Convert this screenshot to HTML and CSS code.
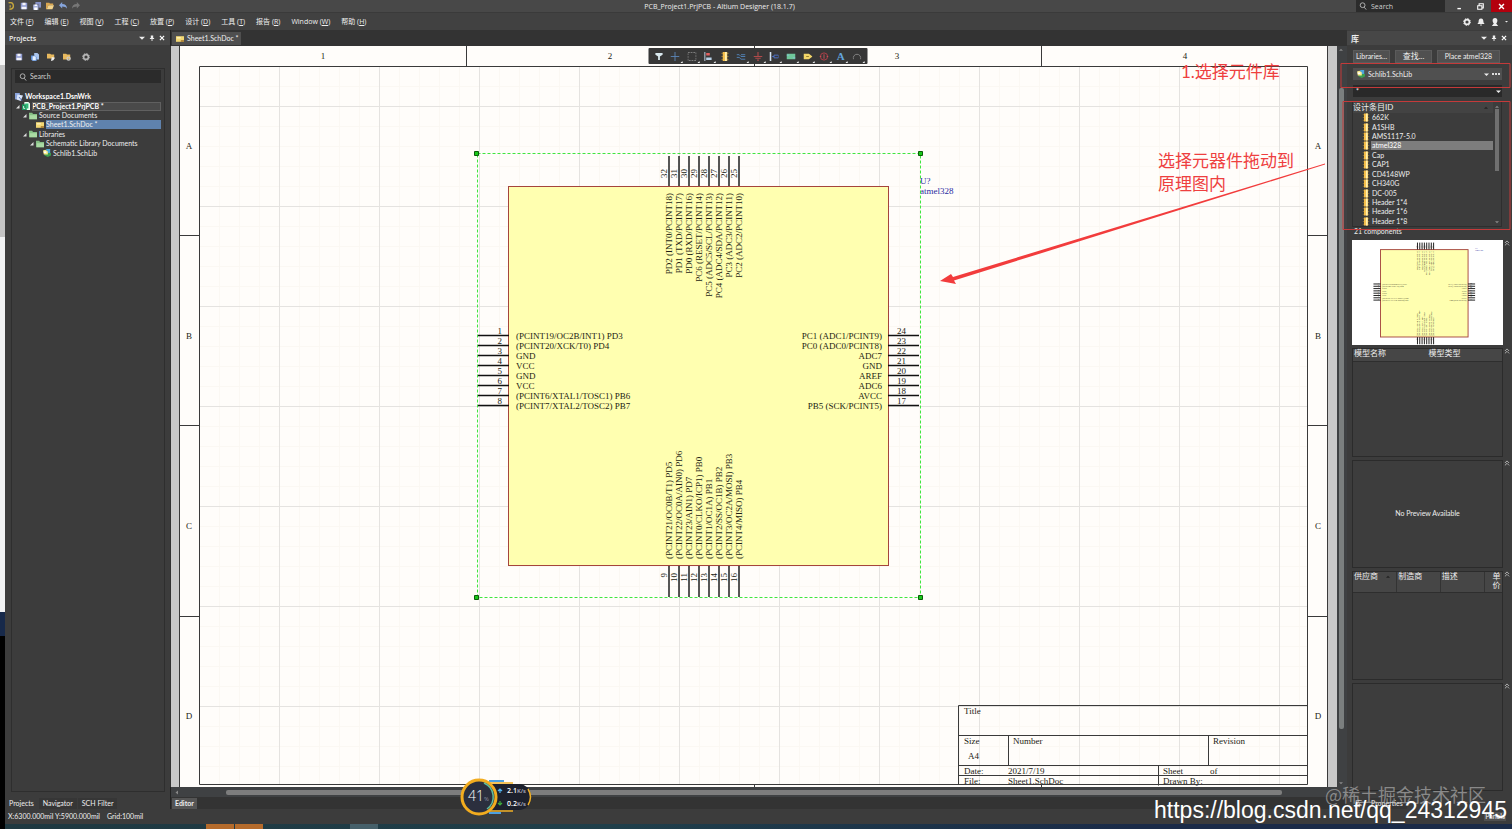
FILE: index.html
```html
<!DOCTYPE html>
<html lang="zh-CN">
<head>
    <meta charset="UTF-8">
    <meta name="viewport" content="width=device-width, initial-scale=1.0">
    <title>PCB_Project1.PrjPCB - Altium Designer (18.1.7)</title>
    <link rel="stylesheet" href="styles.css">
</head>
<body>
    <svg class="defs" aria-hidden="true">
        <symbol id="i-save" viewBox="0 0 10 10"><path d="M1 1h8v8H1z" fill="#8f9bd0"/><path d="M3 1h4v3H3zM2 6h6v3H2z" fill="#f4f4fa"/></symbol>
        <symbol id="i-saveall" viewBox="0 0 10 10"><path d="M3 0h7v7H3z" fill="#8792c8"/><path d="M0 3h7v7H0z" fill="#a9b3e0" stroke="#444" stroke-width=".5"/><path d="M2 3h3v2H2zM1.500 7h4v3h-4z" fill="#fff"/></symbol>
        <symbol id="i-docs" viewBox="0 0 10 10"><path d="M4 0h4l2 2v6H4z" fill="#a9c4ec"/><path d="M0 3h4l3 2v5H2L0 8z" fill="#5f8fd6"/><path d="M2 4h3l1 1v4H2z" fill="#e6effc"/></symbol>
        <symbol id="i-open" viewBox="0 0 10 10"><path d="M0 1h4l1 1h4v2H3L1 9H0z" fill="#d9a650"/><path d="M3 4h7L8 9H1z" fill="#f5d58c"/></symbol>
        <symbol id="i-undo" viewBox="0 0 10 10"><path d="M0 4l4-4v2.500c4 0 6 2 6 6-1-2-3-3-6-3V8z" fill="#86a5dc"/></symbol>
        <symbol id="i-redo" viewBox="0 0 10 10"><path d="M10 4L6 0v2.500c-4 0-6 2-6 6 1-2 3-3 6-3V8z" fill="#777"/></symbol>
        <symbol id="i-search" viewBox="0 0 10 10"><circle cx="4.500" cy="4" r="3" fill="none" stroke="#ccc"/><path d="M6.500 6.500L9 9.500" stroke="#ccc"/></symbol>
        <symbol id="i-gear" viewBox="0 0 10 10"><circle cx="5" cy="5" r="3" fill="none" stroke="currentColor" stroke-width="2"/><circle cx="5" cy="5" r="4.300" fill="none" stroke="currentColor" stroke-width="1.200" stroke-dasharray="1.700 1.677"/></symbol>
        <symbol id="i-bell" viewBox="0 0 10 10"><path d="M5 0.500c2.500 0 3 2 3 4 0 1.500.5 2 1.500 3H.5c1-1 1.500-1.500 1.500-3 0-2 .5-4 3-4zM4 8h2v1.500H4z" fill="#eee"/></symbol>
        <symbol id="i-user" viewBox="0 0 10 10"><path d="M5 0c2 0 3 1.500 3 3.200S7 6.500 6.500 7L9 10H1l2.500-3C3 6.500 2 5 2 3.200S3 0 5 0z" fill="#eee"/></symbol>
        <symbol id="i-down" viewBox="0 0 10 10"><path d="M0 3h10L5 8z" fill="currentColor"/></symbol>
        <symbol id="i-up" viewBox="0 0 10 10"><path d="M0 7h10L5 2z" fill="currentColor"/></symbol>
        <symbol id="i-pin" viewBox="0 0 10 10"><path d="M3 1h4v4h1.500v1.500H1.500V5H3z" fill="#eee"/><path d="M5 6v4" stroke="#eee" stroke-width="1.500"/></symbol>
        <symbol id="i-x" viewBox="0 0 10 10"><path d="M1.500 1.500l7 7m0-7l-7 7" stroke="#fff" stroke-width="2"/></symbol>
        <symbol id="i-tri" viewBox="0 0 10 10"><path d="M9 2v7H2z" fill="#ddd"/></symbol>
        <symbol id="i-folder" viewBox="0 0 10 10"><path d="M0 1h4l1 1.500h5V9H0z" fill="#86bf86"/><path d="M1 4h9v5H1z" fill="#a9d9a3"/></symbol>
        <symbol id="i-sheet" viewBox="0 0 10 10"><path d="M0 1.500h10v7H0z" fill="#f3d772"/><path d="M6 6.500h4v2H6z" fill="#a4782f"/><path d="M1 2.500h5v2H1z" fill="#fbeeb0"/></symbol>
        <symbol id="i-prj" viewBox="0 0 10 10"><path d="M3 0h5l2 2v8H3z" fill="#e9fff2"/><path d="M0 3h6v7H0z" fill="#1a9a60"/><path d="M4 2h4v6H6V4H4z" fill="#2cba78"/><path d="M2 5v3h2" fill="none" stroke="#fff"/></symbol>
        <symbol id="i-work" viewBox="0 0 10 10"><path d="M0 0h6v8H0z" fill="#8aa4dd"/><path d="M3 2l7 1-3 7-5-2z" fill="#d9e4fa"/><path d="M5 5l4 5" stroke="#4569b5"/></symbol>
        <symbol id="i-lib" viewBox="0 0 10 10"><path d="M4 0h5v5H4z" fill="#4ba5d8"/><path d="M2 5h8v3L6 10 2 8z" fill="#3c9e4f"/><path d="M0 2l3-1 3 2v4H1z" fill="#fbeb8c"/><path d="M1 3h3v2H1z" fill="#fff"/></symbol>
        <symbol id="i-part" viewBox="0 0 10 10"><path d="M1 1.500h8M1 5h8M1 8.500h8" stroke="#9a7a34"/><path d="M2.500 0h5v10h-5z" fill="#f5bf4c"/><path d="M5 0h2v10H5z" fill="#fff0b0"/></symbol>
        <symbol id="i-chev" viewBox="0 0 10 10"><path d="M1.500 5L5 1.500 8.500 5M1.500 9L5 5.500 8.500 9" fill="none" stroke="#bbb" stroke-width="1.500"/></symbol>
    </svg>

    <div class="backdrop"><i></i><b></b></div>

    <div class="app">
        <header class="titlebar">
            <div class="quick">
                <svg viewBox="0 0 10 10"><path d="M2 1c4-1 6 1 6 4S6 9 3 9" fill="none" stroke="#c5a63d" stroke-width="1.800"/><path d="M4 4v3" stroke="#c5a63d" stroke-width="1.500"/></svg>
                <svg><use href="#i-save"/></svg>
                <svg><use href="#i-saveall"/></svg>
                <svg><use href="#i-open"/></svg>
                <svg><use href="#i-undo"/></svg>
                <svg><use href="#i-redo"/></svg>
            </div>
            <h1>PCB_Project1.PrjPCB - Altium Designer (18.1.7)</h1>
            <div class="window-tools">
                <label class="top-search"><svg><use href="#i-search"/></svg><input type="text" placeholder="Search" aria-label="Search"></label>
                <button class="win" aria-label="Minimize"><svg viewBox="0 0 10 10"><path d="M2 8h5" stroke="#fff" stroke-width="2"/></svg></button>
                <button class="win" aria-label="Restore"><svg viewBox="0 0 10 10"><path d="M1 4h6v5H1zM3 4V1h6v6H7" fill="none" stroke="#fff" stroke-width="1.500"/></svg></button>
                <button class="win close" aria-label="Close"><svg><use href="#i-x"/></svg></button>
            </div>
        </header>

        <nav class="menubar">
            <button>文件 (<u>F</u>)</button>
            <button>编辑 (<u>E</u>)</button>
            <button>视图 (<u>V</u>)</button>
            <button>工程 (<u>C</u>)</button>
            <button>放置 (<u>P</u>)</button>
            <button>设计 (<u>D</u>)</button>
            <button>工具 (<u>T</u>)</button>
            <button>报告 (<u>R</u>)</button>
            <button>Window (<u>W</u>)</button>
            <button>帮助 (<u>H</u>)</button>
            <div class="account">
                <svg><use href="#i-gear"/></svg>
                <svg><use href="#i-bell"/></svg>
                <svg><use href="#i-user"/></svg>
                <svg class="tiny"><use href="#i-down"/></svg>
            </div>
        </nav>

        <main class="workspace">
            <aside class="projects">
                <div class="panel-head">
                    <h2>Projects</h2>
                    <svg><use href="#i-down"/></svg>
                    <svg><use href="#i-pin"/></svg>
                    <svg><use href="#i-x"/></svg>
                </div>
                <div class="project-tools">
                    <svg><use href="#i-save"/></svg>
                    <svg><use href="#i-docs"/></svg>
                    <svg viewBox="0 0 10 10"><path d="M0 1h4l1 1h4v5H0z" fill="#e8b95e"/><path d="M6 5l4 1-2 3-3 1z" fill="#eee"/></svg>
                    <svg viewBox="0 0 10 10"><path d="M0 1h4l1 1h4v6H0z" fill="#e8b95e"/><circle cx="7" cy="7" r="2" fill="none" stroke="#ccc" stroke-width="1.500"/></svg>
                    <svg><use href="#i-gear"/></svg>
                </div>
                <div class="project-body">
                    <label class="project-search"><svg><use href="#i-search"/></svg><input type="text" placeholder="Search" aria-label="Search projects"></label>
                    <ul class="tree">
                        <li class="bold"><svg><use href="#i-work"/></svg><span>Workspace1.DsnWrk</span></li>
                        <li class="bold lv1 project"><svg class="tri"><use href="#i-tri"/></svg><svg><use href="#i-prj"/></svg><span>PCB_Project1.PrjPCB *</span></li>
                        <li class="lv2"><svg class="tri"><use href="#i-tri"/></svg><svg><use href="#i-folder"/></svg><span>Source Documents</span></li>
                        <li class="lv3 current"><svg><use href="#i-sheet"/></svg><span>Sheet1.SchDoc *</span></li>
                        <li class="lv2"><svg class="tri"><use href="#i-tri"/></svg><svg><use href="#i-folder"/></svg><span>Libraries</span></li>
                        <li class="lv4"><svg class="tri"><use href="#i-tri"/></svg><svg><use href="#i-folder"/></svg><span>Schematic Library Documents</span></li>
                        <li class="lv5"><svg><use href="#i-lib"/></svg><span>Schlib1.SchLib</span></li>
                    </ul>
                </div>
                <div class="bottom-tabs">
                    <button class="active">Projects</button>
                    <button>Navigator</button>
                    <button>SCH Filter</button>
                </div>
            </aside>

            <section class="editor">
                <div class="doc-tabs">
                    <button><svg><use href="#i-sheet"/></svg>Sheet1.SchDoc *</button>
                </div>
                <div class="canvas-row">
                    <div class="canvas">
                        <svg class="sheet" viewBox="171 46 1166 741" preserveAspectRatio="xMinYMin meet">
                            <defs>
                                <pattern id="fine" x="199" y="6" width="20" height="20" patternUnits="userSpaceOnUse"><path d="M.5 0v20M0 .5h20" stroke="#fbf8f3" fill="none"/></pattern>
                                <pattern id="grid" x="179" y="106" width="100" height="100" patternUnits="userSpaceOnUse"><path d="M.5 0v100M0 .5h100" stroke="#e5e3e0" fill="none"/></pattern>
                            </defs>
                            <rect x="179" y="46" width="1149" height="741" fill="#fffdfa"/>
                            <rect x="199" y="66" width="1109" height="719" fill="url(#fine)"/>
                            <rect x="199" y="66" width="1109" height="719" fill="url(#grid)"/>
                            <path class="frame" d="M199.500 66.500h1108v718h-1108zM179.500 46v741M1327.500 46v741M466.500 46v20M754.500 46v20M1041.500 46v20M466.500 785v2M754.500 785v2M1041.500 785v2M179 235.500h20M179 425.500h20M179 616.500h20M1308 235.500h20M1308 425.500h20M1308 616.500h20"/>
                            <g class="zones">
                                <text x="323" y="59">1</text><text x="610" y="59">2</text><text x="897" y="59">3</text><text x="1185" y="59">4</text>
                                <text x="189" y="149">A</text><text x="189" y="339">B</text><text x="189" y="529">C</text><text x="189" y="719">D</text>
                                <text x="1318" y="149">A</text><text x="1318" y="339">B</text><text x="1318" y="529">C</text><text x="1318" y="719">D</text>
                            </g>

                            <!-- title block -->
                            <path class="frame" d="M958.500 785v-79.500h349M958.500 735.500h349M958.500 765.500h349M958.500 775.500h349M1008.500 735.500v30M1208.500 735.500v30M1158.500 765.500v20"/>
                            <g class="block">
                                <text x="964" y="714">Title</text>
                                <text x="964" y="744">Size</text><text x="968" y="759">A4</text>
                                <text x="1013" y="744">Number</text><text x="1213" y="744">Revision</text>
                                <text x="964" y="774">Date:</text><text x="1008" y="774">2021/7/19</text>
                                <text x="1163" y="774">Sheet</text><text x="1210" y="774">of</text>
                                <text x="964" y="784">File:</text><text x="1008" y="784">Sheet1.SchDoc</text>
                                <text x="1163" y="784">Drawn By:</text>
                            </g>

                            <g id="chip">
                                <rect class="body" x="508.500" y="186.500" width="380" height="379"/>
                                <path class="pins" d="M478 335.500h31M478 345.500h31M478 355.500h31M478 365.500h31M478 375.500h31M478 385.500h31M478 395.500h31M478 405.500h31M888 335.500h31M888 345.500h31M888 355.500h31M888 365.500h31M888 375.500h31M888 385.500h31M888 395.500h31M888 405.500h31M669 156v30M679 156v30M689 156v30M699 156v30M709 156v30M719 156v30M729 156v30M739 156v30M669 566v31M679 566v31M689 566v31M699 566v31M709 566v31M719 566v31M729 566v31M739 566v31"/>
                                <g class="names">
                                    <text x="516" y="339">(PCINT19/OC2B/INT1) PD3</text>
                                    <text x="516" y="349">(PCINT20/XCK/T0) PD4</text>
                                    <text x="516" y="359">GND</text>
                                    <text x="516" y="369">VCC</text>
                                    <text x="516" y="379">GND</text>
                                    <text x="516" y="389">VCC</text>
                                    <text x="516" y="399">(PCINT6/XTAL1/TOSC1) PB6</text>
                                    <text x="516" y="409">(PCINT7/XTAL2/TOSC2) PB7</text>
                                </g>
                                <g class="names end">
                                    <text x="882" y="339">PC1 (ADC1/PCINT9)</text>
                                    <text x="882" y="349">PC0 (ADC0/PCINT8)</text>
                                    <text x="882" y="359">ADC7</text>
                                    <text x="882" y="369">GND</text>
                                    <text x="882" y="379">AREF</text>
                                    <text x="882" y="389">ADC6</text>
                                    <text x="882" y="399">AVCC</text>
                                    <text x="882" y="409">PB5 (SCK/PCINT5)</text>
                                </g>
                                <g class="numbers end">
                                    <text x="502" y="334">1</text><text x="502" y="344">2</text><text x="502" y="354">3</text><text x="502" y="364">4</text>
                                    <text x="502" y="374">5</text><text x="502" y="384">6</text><text x="502" y="394">7</text><text x="502" y="404">8</text>
                                </g>
                                <g class="numbers">
                                    <text x="897" y="334">24</text><text x="897" y="344">23</text><text x="897" y="354">22</text><text x="897" y="364">21</text>
                                    <text x="897" y="374">20</text><text x="897" y="384">19</text><text x="897" y="394">18</text><text x="897" y="404">17</text>
                                </g>
                                <!-- vertical pins, drawn along x then turned upwards -->
                                <g class="names end" transform="translate(0 193) rotate(-90)">
                                    <text y="672">PD2 (INT0/PCINT18)</text>
                                    <text y="682">PD1 (TXD/PCINT17)</text>
                                    <text y="692">PD0 (RXD/PCINT16)</text>
                                    <text y="702">PC6 (RESET/PCINT14)</text>
                                    <text y="712">PC5 (ADC5/SCL/PCINT13)</text>
                                    <text y="722">PC4 (ADC4/SDA/PCINT12)</text>
                                    <text y="732">PC3 (ADC3/PCINT11)</text>
                                    <text y="742">PC2 (ADC2/PCINT10)</text>
                                </g>
                                <g class="numbers" transform="translate(0 178) rotate(-90)">
                                    <text y="667">32</text><text y="677">31</text><text y="687">30</text><text y="697">29</text>
                                    <text y="707">28</text><text y="717">27</text><text y="727">26</text><text y="737">25</text>
                                </g>
                                <g class="names" transform="translate(0 559) rotate(-90)">
                                    <text y="672">(PCINT21/OC0B/T1) PD5</text>
                                    <text y="682">(PCINT22/OC0A/AIN0) PD6</text>
                                    <text y="692">(PCINT23/AIN1) PD7</text>
                                    <text y="702">(PCINT0/CLKO/ICP1) PB0</text>
                                    <text y="712">(PCINT1/OC1A) PB1</text>
                                    <text y="722">(PCINT2/SS/OC1B) PB2</text>
                                    <text y="732">(PCINT3/OC2A/MOSI) PB3</text>
                                    <text y="742">(PCINT4/MISO) PB4</text>
                                </g>
                                <g class="numbers end" transform="translate(0 573) rotate(-90)">
                                    <text y="667">9</text><text y="677">10</text><text y="687">11</text><text y="697">12</text>
                                    <text y="707">13</text><text y="717">14</text><text y="727">15</text><text y="737">16</text>
                                </g>
                                <g class="labels"><text x="920" y="184">U?</text><text x="920" y="194">atmel328</text></g>
                            </g>
                            <rect class="selection" x="477.500" y="153.500" width="443" height="444"/>
                            <path class="handles" d="M474.500 151.500h4v4h-4zM918.500 151.500h4v4h-4zM474.500 595.500h4v4h-4zM918.500 595.500h4v4h-4z"/>
                        </svg>

                        <div class="float-bar">
                            <button aria-label="Filter"><svg viewBox="0 0 10 10"><path d="M1 1h8v2L6 5v4H4V5L1 3z" fill="#d9e8ee"/></svg></button>
                            <button class="more" aria-label="Move"><svg viewBox="0 0 10 10"><path d="M5 0v10M0 5h10" stroke="#5b86b8"/></svg></button>
                            <button class="more" aria-label="Select"><svg viewBox="0 0 10 10"><path d="M.5.5h9v9h-9z" fill="none" stroke="#8a8a8a" stroke-dasharray="2 1"/></svg></button>
                            <button class="more" aria-label="Align"><svg viewBox="0 0 10 10"><path d="M1.500 0v10" stroke="#cde"/><path d="M3 1h4v3H3z" fill="#e06060"/><path d="M3 6h6v3H3z" fill="#b8d0e6"/></svg></button>
                            <button aria-label="Part"><svg><use href="#i-part"/></svg></button>
                            <button class="more" aria-label="Wire"><svg viewBox="0 0 10 10"><path d="M0 3h3l2 2h5M0 6h3l2 2h5M5 3h5" fill="none" stroke="#5587bc"/></svg></button>
                            <button class="more" aria-label="Power port"><svg viewBox="0 0 10 10"><path d="M5 0v5M0 5h10M2 7h6M4 9h2" stroke="#b04a4a" stroke-width="1.200"/></svg></button>
                            <button class="more" aria-label="Harness"><svg viewBox="0 0 10 10"><path d="M0 0h2v10H0z" fill="#d6e4f2"/><path d="M3 5h2m0-1.500h5v3H5z" stroke="#4e74d0" fill="none"/></svg></button>
                            <button class="more" aria-label="Sheet symbol"><svg viewBox="0 0 10 10"><path d="M0 2h10v6H0z" fill="#6fc79a"/><path d="M0 3h3v1H0zM7 6h3v1H7z" fill="#8ec0e6"/></svg></button>
                            <button class="more" aria-label="Port"><svg viewBox="0 0 10 10"><path d="M0 2h6l4 3-4 3H0z" fill="#f2d568"/><path d="M3 5h3" stroke="#8c7426"/></svg></button>
                            <button class="more" aria-label="Directive"><svg viewBox="0 0 10 10"><circle cx="5" cy="5" r="4" fill="none" stroke="#b8404a"/><path d="M5 2.500v5M0 5h2M8 5h2" stroke="#d05058"/></svg></button>
                            <button class="more letter" aria-label="Text">A</button>
                            <button class="more" aria-label="Arc"><svg viewBox="0 0 10 10"><path d="M1 8a4.200 4.200 0 1 1 8 0" fill="none" stroke="#888"/></svg></button>
                        </div>
                    </div>
                    <div class="vscroll"><svg><use href="#i-up"/></svg><i></i><svg><use href="#i-down"/></svg></div>
                </div>
                <div class="hscroll"><svg viewBox="0 0 10 10"><path d="M8 1v8L3 5z" fill="#888"/></svg><i></i></div>
                <div class="bottom-tabs"><button class="lit">Editor</button></div>
            </section>

            <aside class="library">
                <div class="panel-head">
                    <h2>库</h2>
                    <svg><use href="#i-down"/></svg>
                    <svg><use href="#i-pin"/></svg>
                    <svg><use href="#i-x"/></svg>
                </div>
                <div class="lib-buttons">
                    <button>Libraries...</button>
                    <button class="cjk">查找...</button>
                    <button class="wide">Place atmel328</button>
                </div>
                <div class="lib-select">
                    <svg><use href="#i-lib"/></svg>
                    <select aria-label="Library"><option>Schlib1.SchLib</option></select>
                    <svg class="arrow"><use href="#i-down"/></svg>
                    <span class="dots"></span>
                </div>
                <div class="lib-filter">
                    <input type="text" value="*" aria-label="Filter">
                    <svg class="arrow"><use href="#i-down"/></svg>
                </div>
                <div class="parts">
                    <h3>设计条目ID <svg><use href="#i-up"/></svg></h3>
                    <ul>
                        <li><svg><use href="#i-part"/></svg><span>662K</span></li>
                        <li><svg><use href="#i-part"/></svg><span>A1SHB</span></li>
                        <li><svg><use href="#i-part"/></svg><span>AMS1117-5.0</span></li>
                        <li class="current"><svg><use href="#i-part"/></svg><span>atmel328</span></li>
                        <li><svg><use href="#i-part"/></svg><span>Cap</span></li>
                        <li><svg><use href="#i-part"/></svg><span>CAP1</span></li>
                        <li><svg><use href="#i-part"/></svg><span>CD4148WP</span></li>
                        <li><svg><use href="#i-part"/></svg><span>CH340G</span></li>
                        <li><svg><use href="#i-part"/></svg><span>DC-005</span></li>
                        <li><svg><use href="#i-part"/></svg><span>Header 1*4</span></li>
                        <li><svg><use href="#i-part"/></svg><span>Header 1*6</span></li>
                        <li><svg><use href="#i-part"/></svg><span>Header 1*8</span></li>
                    </ul>
                    <div class="parts-scroll"><svg><use href="#i-up"/></svg><i></i><svg><use href="#i-down"/></svg></div>
                </div>
                <p class="count">21 components</p>
                <div class="block-row fixed">
                    <svg class="preview" viewBox="385 145 655 455"><use href="#chip"/></svg>
                    <svg class="chev"><use href="#i-chev"/></svg>
                </div>
                <div class="block-row">
                    <div class="box models">
                        <table><thead><tr><th>模型名称</th><th>模型类型</th></tr></thead></table>
                    </div>
                    <svg class="chev"><use href="#i-chev"/></svg>
                </div>
                <div class="block-row">
                    <div class="box empty">No Preview Available</div>
                    <svg class="chev"><use href="#i-chev"/></svg>
                </div>
                <div class="block-row">
                    <div class="box suppliers">
                        <table><thead><tr><th>供应商 <svg><use href="#i-up"/></svg></th><th>制造商</th><th>描述</th><th class="price">单价</th></tr></thead></table>
                    </div>
                    <svg class="chev"><use href="#i-chev"/></svg>
                </div>
                <div class="block-row">
                    <div class="box"></div>
                    <svg class="chev"><use href="#i-chev"/></svg>
                </div>
                <div class="bottom-tabs"><button class="active">库</button><button>Properties</button></div>
            </aside>
        </main>

        <footer class="status">
            <span>X:6300.000mil Y:5900.000mil</span>
            <span>Grid:100mil</span>
            <button>Panels</button>
        </footer>
        <div class="taskbar"><i></i><i></i><b></b></div>
    </div>

    <!-- notes drawn over the window -->
    <svg class="notes" viewBox="0 0 372 300">
        <path class="note-boxes" d="M201 63.500h169v24H201zM203 101.500h167v128H203z"/>
        <text x="41" y="78">1.选择元件库</text>
        <text x="18" y="167">选择元器件拖动到</text>
        <text x="18" y="190">原理图内</text>
        <path d="M185 163.500L-187 277-189 274-200 281-184 284-186 280.500 185 164.500z" fill="#f23c3c"/>
    </svg>

    <div class="net-widget">
        <svg viewBox="0 0 74 40">
            <path d="M30 4h15M30 36h12" stroke="#4c9fe0" stroke-width="2"/>
            <path d="M30 7h30a12 13 0 0 1 0 26H30z" fill="#1d212d"/>
            <path d="M22 6h32M22 34h32M69 12q5 8 0 16" fill="none" stroke="#efaf25" stroke-width="1.500"/>
            <circle cx="20" cy="20" r="17" fill="#2b2f3e" stroke="#f2ac1f" stroke-width="3"/>
            <path d="M25 6a15 15 0 0 1 3 26" fill="none" stroke="#60bd9d" stroke-width="1.500"/>
            <path d="M41 16v-4M39 14l2-2 2 2" fill="none" stroke="#4fb2ef" stroke-width="1.200"/>
            <path d="M41 24v4M39 26l2 2 2-2" fill="none" stroke="#3faf3d" stroke-width="1.200"/>
        </svg>
        <strong>41<small>%</small></strong>
        <span class="rate up">2.1<small>K/s</small></span>
        <span class="rate down">0.2<small>K/s</small></span>
    </div>

    <div class="mark community">@稀土掘金技术社区</div>
    <div class="mark source">https://blog.csdn.net/qq_24312945</div>
</body>
</html>
```
FILE: styles.css
```css
* {
    box-sizing: border-box;
}
body {
    margin: 0;
    height: 100vh;
    display: flex;
    position: relative;
    overflow: hidden;
    background: #000;
    color: #eee;
    font-family: Lato, "Noto Sans CJK SC", sans-serif;
    font-size: 7px;
    line-height: 9px;
}
svg {
    display: block;
    width: 8px;
    height: 8px;
    flex: none;
}
.defs {
    position: absolute;
    width: 0;
    height: 0;
}
button, input, select {
    font: inherit;
    color: inherit;
    background: none;
    border: 0;
    padding: 0;
    margin: 0;
    min-width: 0;
    outline: none;
    appearance: none;
}
input::placeholder {
    color: #d0d0d0;
    opacity: 1;
}
ul {
    list-style: none;
    margin: 0;
    padding: 0;
}
h1, h2, h3, p {
    margin: 0;
    font-size: inherit;
    font-weight: normal;
}

/* window behind the app */
.backdrop {
    width: 5px;
    flex: none;
    display: flex;
    flex-direction: column;
    background: #000;
}
.backdrop i {
    height: 612px;
    background: linear-gradient(#f5f5f5 65px, #c4c4c4 65px, #c4c4c4 237px, #f1f2f3 237px);
}
.backdrop b {
    height: 24px;
    background: #17294a;
}
.app {
    flex: 1;
    min-width: 0;
    display: flex;
    flex-direction: column;
    background: #3c3c3c;
}

/* title bar and menu */
.titlebar {
    height: 13px;
    display: grid;
    grid-template-columns: 1fr auto 1fr;
    align-items: center;
    background: #484848;
    border-bottom: 1px solid #3a3a3a;
    font-family: "Open Sans", "Noto Sans CJK SC", sans-serif;
}
.quick {
    display: flex;
    gap: 5px;
    padding-left: 2px;
}
.titlebar h1 {
    padding-right: 78px;
}
.window-tools {
    display: flex;
    justify-content: flex-end;
}
.top-search {
    display: flex;
    align-items: center;
    width: 89px;
    height: 12px;
    padding-left: 3px;
    gap: 4px;
    margin-right: 4px;
    background: #2b2b2b;
}
.top-search input {
    width: 60px;
}
.win {
    width: 21px;
    height: 12px;
    display: flex;
    align-items: center;
    justify-content: center;
}
.win svg {
    width: 7px;
    height: 7px;
}
.win.close {
    background: #b3000d;
}
.menubar {
    height: 17px;
    display: flex;
    align-items: center;
    gap: 11px;
    padding-left: 5px;
    background: #414141;
    font-family: "Open Sans", "Noto Sans CJK SC", sans-serif;
}
.account {
    margin-left: auto;
    display: flex;
    align-items: center;
    gap: 6px;
    padding-right: 4px;
}
.account .tiny {
    width: 3px;
    height: 3px;
}

.workspace {
    flex: 1;
    min-height: 0;
    display: flex;
    background: #333;
}

/* shared panel parts */
.panel-head {
    height: 14px;
    margin-top: 1px;
    display: flex;
    align-items: center;
    gap: 4px;
    padding: 0 5px 0 4px;
    background: #474747;
}
.panel-head h2 {
    flex: 1;
    font-family: "Open Sans", "Noto Sans CJK SC", sans-serif;
    font-weight: 600;
}
.panel-head svg {
    width: 6px;
    height: 6px;
}
.bottom-tabs {
    height: 12px;
    display: flex;
    align-items: center;
    gap: 1px;
}
.bottom-tabs button {
    height: 11px;
    padding: 0 4px;
    background: #363636;
}
.bottom-tabs .active {
    background: #3c3c3c;
}
.bottom-tabs .lit {
    margin-left: 1px;
    padding: 0 3px;
    background: #555;
    font-weight: 700;
}

/* projects panel */
.projects {
    width: 166px;
    flex: none;
    display: flex;
    flex-direction: column;
    background: #3c3c3c;
    border-right: 1px solid #222;
}
.project-tools {
    display: flex;
    align-items: center;
    height: 22px;
    margin-top: 1px;
    padding-left: 10px;
    gap: 8px;
    color: #b5b5b5;
}
.project-tools svg:last-child {
    margin-left: 3px;
}
.project-body {
    flex: 1;
    margin: 0 5px 5px 6px;
    border: 1px solid #2e2e2e;
    padding: 1px 3px 0 3px;
}
.project-search {
    display: flex;
    align-items: center;
    gap: 3px;
    height: 13px;
    padding-left: 4px;
    background: #2b2b2b;
}
.tree {
    height: 66px;
    margin-top: 9px;
    display: grid;
    grid-template-rows: repeat(7, 1fr);
}
.tree li {
    display: flex;
    align-items: center;
    gap: 2px;
    min-height: 0;
    white-space: nowrap;
}
.tree .tri {
    width: 5px;
    height: 5px;
}
.bold {
    font-weight: 700;
    color: #fff;
}
.lv1 span, .lv3 span {
    flex: 1;
}
.project span {
    background: #4a4a4a;
    outline: 1px solid #606060;
    outline-offset: -1px;
}
.lv2 {
    padding-left: 7px;
}
.lv3 {
    padding-left: 21px;
}
.lv4 {
    padding-left: 14px;
}
.lv5 {
    padding-left: 28px;
}
.tree .current span {
    background: #5f82ad;
}

/* editor */
.editor {
    flex: 1;
    min-width: 0;
    display: flex;
    flex-direction: column;
}
.doc-tabs {
    height: 16px;
    padding-top: 2px;
    background: #333;
}
.doc-tabs button {
    height: 13px;
    display: flex;
    align-items: center;
    gap: 3px;
    padding: 0 2px 0 4px;
    margin-left: 1px;
    background: #4f4f4f;
}
.canvas-row {
    flex: 1;
    min-height: 0;
    display: flex;
}
.canvas {
    flex: 1;
    position: relative;
    background: #c9c9c9;
    border-left: 1px solid #333;
    margin-left: -1px;
}
.sheet {
    width: 100%;
    height: 100%;
}
.sheet text, .preview text {
    font-family: "Liberation Serif", serif;
    font-size: 9px;
    fill: #1c1c12;
}
.frame {
    fill: none;
    stroke: #3a3a3a;
}
.zones {
    text-anchor: middle;
}
.body {
    fill: #ffffb0;
    stroke: #a5453c;
    stroke-width: var(--edge, 1);
}
.pins {
    stroke: #111;
    stroke-width: var(--pin, 1.4);
}
.end {
    text-anchor: end;
}
.sheet .labels text {
    fill: #2a2aa0;
}
.selection {
    fill: none;
    stroke: #3fe63f;
    stroke-dasharray: 3 2;
}
.handles {
    fill: #18c818;
    stroke: #0a5c0a;
}
.float-bar {
    position: absolute;
    top: 2px;
    left: 50%;
    transform: translateX(-50%);
    margin-left: 4px;
    width: 219px;
    height: 16px;
    padding: 0 2px;
    display: flex;
    background: #373737;
    border-radius: 1px;
}
.float-bar button {
    flex: 1;
    display: flex;
    align-items: center;
    justify-content: center;
    position: relative;
}
.float-bar svg {
    width: 9px;
    height: 9px;
}
.float-bar .more::after {
    content: "";
    position: absolute;
    right: 1px;
    bottom: 1px;
    border: 1px solid #eee;
    border-left-color: transparent;
    border-top-color: transparent;
}
.float-bar .letter {
    font: bold 11px "Liberation Serif", serif;
    color: #62a4de;
}
.vscroll {
    width: 10px;
    padding: 2px 3px 2px 1px;
    display: flex;
    flex-direction: column;
    align-items: center;
    background: #3f4143;
    color: #888;
}
.vscroll svg {
    width: 4px;
    height: 4px;
}
.vscroll i {
    width: 5px;
    flex: 1;
    margin: 36px 0 52px;
    background: #7b7f7f;
    border-radius: 2px;
}
.hscroll {
    height: 10px;
    display: flex;
    align-items: center;
    background: #3f4143;
    padding: 0 65px 0 3px;
}
.hscroll svg {
    width: 5px;
    height: 5px;
}
.hscroll i {
    flex: 1;
    height: 5px;
    margin-left: 47px;
    background: #7d7d7d;
    border-radius: 2px;
}

/* library panel */
.library {
    width: 165px;
    flex: none;
    display: flex;
    flex-direction: column;
    background: #3c3c3c;
}
.library .panel-head h2 {
    font-size: 8px;
}
.lib-buttons {
    display: flex;
    gap: 5px;
    padding: 5px 12px 0 6px;
}
.lib-buttons button {
    width: 37px;
    height: 13px;
    background: #505050;
    border: 1px solid #5b5b5b;
}
.lib-buttons .cjk {
    font-size: 8px;
}
.lib-buttons .wide {
    flex: 1;
}
.lib-select, .lib-filter {
    height: 12px;
    margin: 5px 10px 0 6px;
    display: flex;
    align-items: center;
    gap: 3px;
    padding: 0 2px 0 4px;
    background: #505050;
}
.lib-select select, .lib-filter input {
    flex: 1;
}
.arrow {
    width: 5px;
    height: 5px;
}
.dots {
    width: 8px;
    border-top: 2px dotted #ddd;
}
.lib-filter {
    background: #292929;
    padding: 0 1px 0 3px;
}
.parts {
    display: grid;
    grid-template: 11px 113px / 1fr 8px;
    margin: 4px 10px 0 5px;
    border: 1px solid #2e2e2e;
}
.parts h3 {
    display: flex;
    align-items: center;
    justify-content: space-between;
    padding-right: 5px;
    background: #434343;
    font-size: 8px;
}
.parts h3 svg {
    width: 4px;
    height: 4px;
    color: #222;
}
.parts ul {
    grid-row: 2;
    display: grid;
    grid-template-rows: repeat(12, 1fr);
}
.parts li {
    display: flex;
    align-items: center;
    min-height: 0;
    gap: 1px;
    padding-left: 9px;
}
.parts li svg {
    height: 9px;
}
.parts li span {
    flex: 1;
    padding-left: 1px;
}
.parts .current span {
    background: #7d7d7d;
    color: #fff;
}
.parts-scroll {
    grid-column: 2;
    grid-row: 1 / 3;
    display: flex;
    flex-direction: column;
    align-items: center;
    padding: 3px 0 2px;
    color: #888;
}
.parts-scroll svg {
    width: 4px;
    height: 4px;
}
.parts-scroll i {
    width: 4px;
    height: 62px;
    margin-bottom: auto;
    background: #707070;
}
.count {
    padding-left: 7px;
    height: 13px;
}
.block-row {
    flex: 1;
    min-height: 0;
    display: flex;
    gap: 1px;
    padding-left: 5px;
    margin-bottom: 3px;
}
.block-row.fixed {
    flex: none;
}
.library .bottom-tabs {
    margin-top: 3px;
    padding-left: 4px;
}
.preview {
    --pin: 4;
    --edge: 4;
    width: 151px;
    height: 105px;
    background: #fff;
}
.chev {
    width: 6px;
    height: 6px;
}
.box {
    width: 151px;
    border: 1px solid #2b2b2b;
    background: #3d3d3d;
}
.box table {
    width: 100%;
    border-collapse: collapse;
    table-layout: fixed;
    font-size: 8px;
    background: #464646;
}
.box th {
    padding: 0 1px;
    font-weight: normal;
    text-align: left;
    vertical-align: top;
    border-bottom: 1px solid #2e2e2e;
}
.models th {
    height: 12px;
}
.suppliers th {
    height: 20px;
    border-right: 1px solid #333;
}
.suppliers th svg {
    display: inline-block;
    width: 4px;
    height: 4px;
    margin-left: 6px;
    color: #222;
}
.suppliers .price {
    width: 18px;
    padding-left: 8px;
    border-right: 0;
}
.empty {
    display: flex;
    align-items: center;
    justify-content: center;
}

/* status line and taskbar */
.status {
    height: 15px;
    display: flex;
    align-items: center;
    gap: 7px;
    padding: 0 6px 0 3px;
}
.status button {
    margin-left: auto;
    padding: 0 1px;
    background: #505050;
}
.taskbar {
    height: 5px;
    display: flex;
    gap: 1px;
    padding-left: 201px;
    background: linear-gradient(90deg, #1f3840, #203f4a 40%, #1b2b48 75%);
}
.taskbar i {
    width: 28px;
    background: #b56b2c;
}
.taskbar b {
    width: 28px;
    margin-left: 86px;
    background: #46606a;
}

/* overlays */
.notes {
    position: absolute;
    top: 0;
    right: 0;
    width: 372px;
    height: 300px;
    overflow: visible;
    pointer-events: none;
}
.notes text {
    font-size: 17px;
    fill: #ee3f3f;
}
.note-boxes {
    fill: none;
    stroke: #c43a3a;
}
.net-widget {
    position: absolute;
    left: 459px;
    bottom: 12px;
    width: 74px;
    height: 40px;
    color: #fff;
    font-family: "Open Sans", sans-serif;
}
.net-widget > svg {
    width: 74px;
    height: 40px;
}
.net-widget strong {
    position: absolute;
    left: 9px;
    top: 12px;
    font-size: 14px;
    font-weight: 300;
    line-height: 14px;
}
.net-widget small {
    font-size: 6px;
    color: #b4b8c8;
}
.rate {
    position: absolute;
    left: 48px;
    font-size: 7px;
    font-weight: 600;
}
.up {
    top: 9px;
}
.down {
    top: 22px;
}
.mark {
    position: absolute;
    white-space: nowrap;
    pointer-events: none;
}
.community {
    right: 26px;
    bottom: 23px;
    font-family: "Noto Sans CJK SC", sans-serif;
    font-size: 18px;
    line-height: 24px;
    color: rgba(190, 190, 190, 0.6);
}
.source {
    right: 5px;
    bottom: 6px;
    font-family: "Liberation Sans", sans-serif;
    font-size: 23px;
    line-height: 26px;
    color: #fff;
}
```
